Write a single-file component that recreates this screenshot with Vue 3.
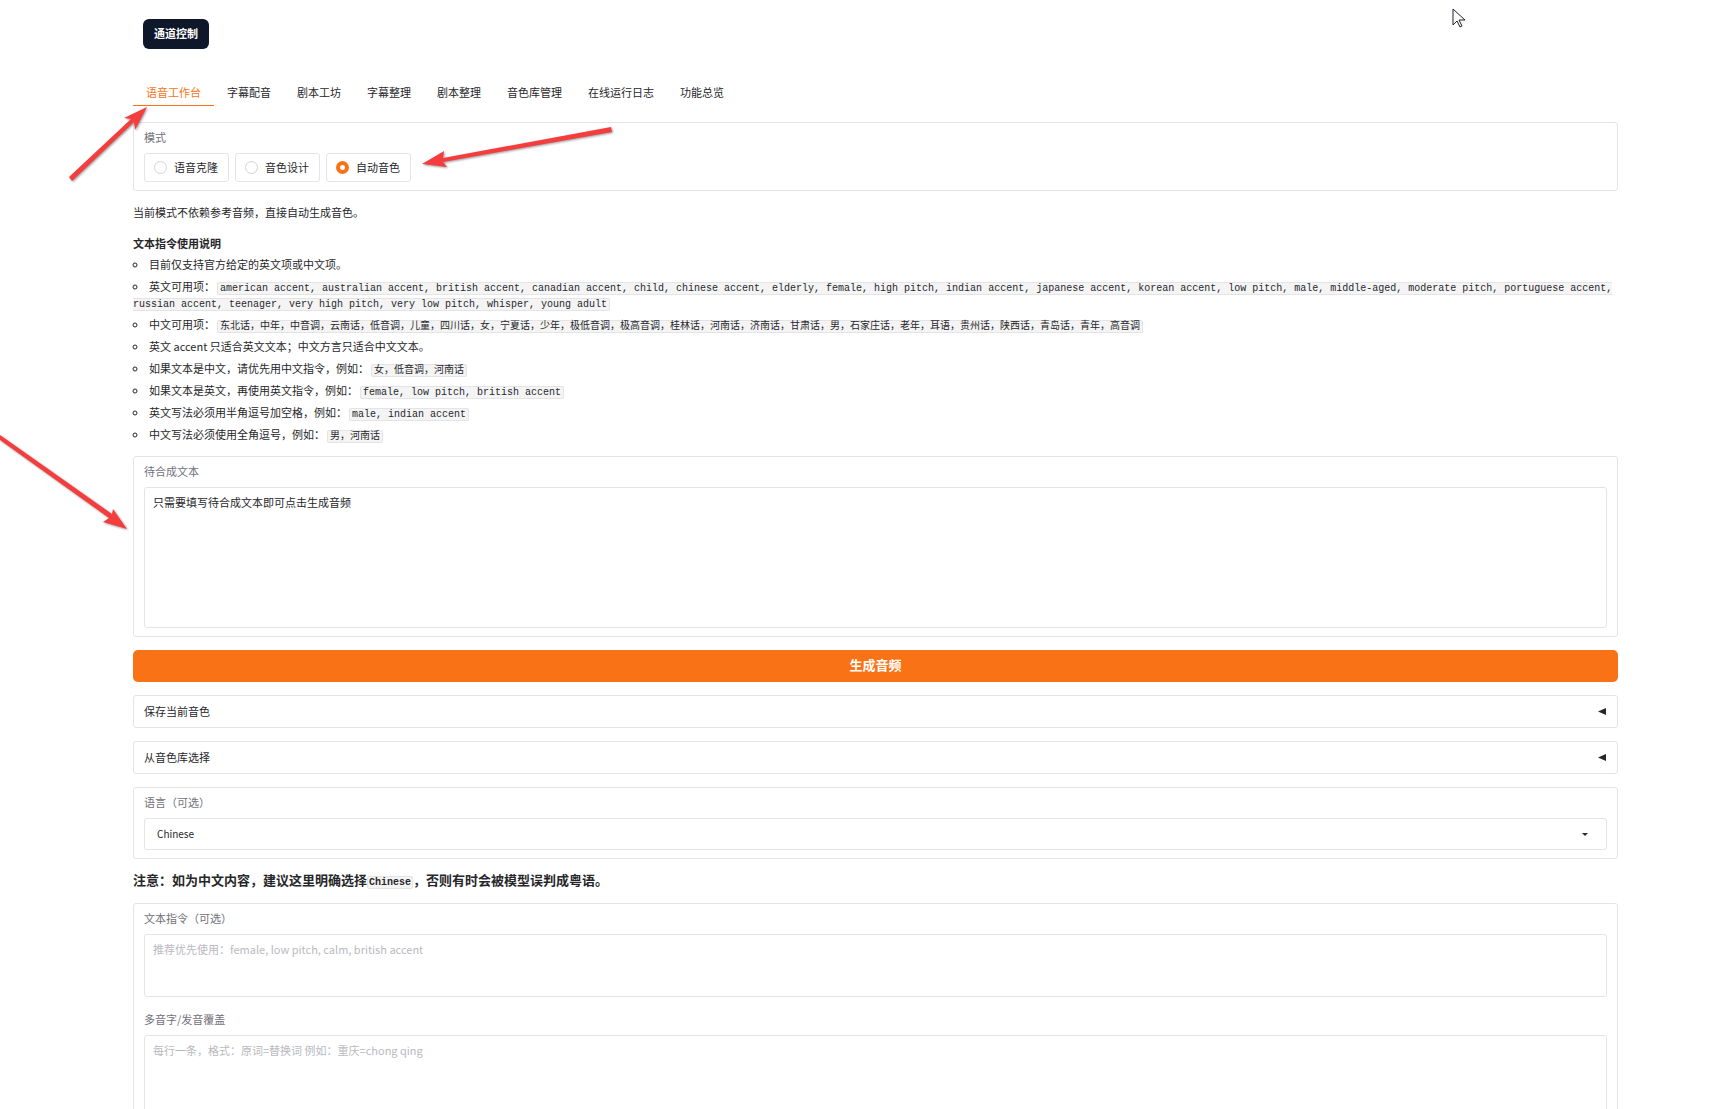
<script setup>
import { ref } from 'vue'

const tabs = ['语音工作台', '字幕配音', '剧本工坊', '字幕整理', '剧本整理', '音色库管理', '在线运行日志', '功能总览']
const activeTab = ref(tabs[0])

const modes = ['语音克隆', '音色设计', '自动音色']
const mode = ref('自动音色')

const tips = [
  { text: '目前仅支持官方给定的英文项或中文项。' },
  {
    text: '英文可用项：',
    code: 'american accent, australian accent, british accent, canadian accent, child, chinese accent, elderly, female, high pitch, indian accent, japanese accent, korean accent, low pitch, male, middle-aged, moderate pitch, portuguese accent, russian accent, teenager, very high pitch, very low pitch, whisper, young adult',
  },
  {
    text: '中文可用项：',
    code: '东北话，中年，中音调，云南话，低音调，儿童，四川话，女，宁夏话，少年，极低音调，极高音调，桂林话，河南话，济南话，甘肃话，男，石家庄话，老年，耳语，贵州话，陕西话，青岛话，青年，高音调',
  },
  { text: '英文 accent 只适合英文文本；中文方言只适合中文文本。' },
  { text: '如果文本是中文，请优先用中文指令，例如：', code: '女，低音调，河南话' },
  { text: '如果文本是英文，再使用英文指令，例如：', code: 'female, low pitch, british accent' },
  { text: '英文写法必须用半角逗号加空格，例如：', code: 'male, indian accent' },
  { text: '中文写法必须使用全角逗号，例如：', code: '男，河南话' },
]

const script = ref('只需要填写待合成文本即可点击生成音频')
const sections = ['保存当前音色', '从音色库选择']
const language = ref('Chinese')
const instruction = ref('')
const pronunciation = ref('')
</script>

<template>
  <div class="page">
    <header class="top">
      <button type="button" class="channel">通道控制</button>
    </header>

    <nav class="tabs" role="tablist">
      <button
        v-for="tab in tabs"
        :key="tab"
        type="button"
        role="tab"
        class="tab"
        :class="{ active: tab === activeTab }"
        :aria-selected="tab === activeTab"
        @click="activeTab = tab"
      >{{ tab }}</button>
    </nav>

    <main class="content">
      <fieldset class="panel modes">
        <legend class="label">模式</legend>
        <div class="options">
          <label v-for="item in modes" :key="item" class="option">
            <input v-model="mode" type="radio" name="mode" :value="item" />
            <span>{{ item }}</span>
          </label>
        </div>
      </fieldset>

      <section class="guide">
        <p class="intro">当前模式不依赖参考音频，直接自动生成音色。</p>
        <h2>文本指令使用说明</h2>
        <ul>
          <li v-for="tip in tips" :key="tip.text">
            {{ tip.text }}<code v-if="tip.code">{{ tip.code }}</code>
          </li>
        </ul>
      </section>

      <div class="panel">
        <label class="label" for="script">待合成文本</label>
        <textarea id="script" v-model="script" class="field large"></textarea>
      </div>

      <button type="button" class="generate">生成音频</button>

      <button v-for="name in sections" :key="name" type="button" class="accordion" aria-expanded="false">
        <span>{{ name }}</span>
        <svg width="8" height="8" viewBox="0 0 8 8" aria-hidden="true"><path d="M0 4.5 8 1v7z" fill="#27272a" /></svg>
      </button>

      <div class="panel">
        <label class="label" for="language">语言（可选）</label>
        <div class="select">
          <select id="language" v-model="language" class="field">
            <option>Chinese</option>
            <option>English</option>
          </select>
          <svg class="caret" width="6" height="3" viewBox="0 0 6 3" aria-hidden="true"><path d="M0 0h6L3 3z" fill="#27272a" /></svg>
        </div>
      </div>

      <h3 class="notice">注意：如为中文内容，建议这里明确选择<code>Chinese</code>，否则有时会被模型误判成粤语。</h3>

      <div class="panel">
        <label class="label" for="instruction">文本指令（可选）</label>
        <textarea
          id="instruction"
          v-model="instruction"
          class="field small"
          placeholder="推荐优先使用：female, low pitch, calm, british accent"
        ></textarea>
        <label class="label next" for="pronunciation">多音字/发音覆盖</label>
        <textarea
          id="pronunciation"
          v-model="pronunciation"
          class="field large"
          placeholder="每行一条，格式：原词=替换词 例如：重庆=chong qing"
        ></textarea>
      </div>
    </main>

    <svg class="marks" width="620" height="540" viewBox="0 0 620 540" aria-hidden="true">
      <g fill="#f53d3d">
        <path d="M69 177 131 119 124 118 147 107 135 130 134 122 72 181z" />
        <path d="M611 127 443 158 444 151 422 164 447 167 443 162 612 132z" />
        <path d="M0 435 112 514 113 509 127 529 103 522 109 518 0 440z" />
      </g>
    </svg>
    <svg class="pointer" width="14" height="20" viewBox="0 0 14 20" aria-hidden="true">
      <path d="M1 1v16l4-4 3 6 2-1-3-6h6z" fill="#fff" stroke="#1f1f2b" stroke-width="1" />
    </svg>
  </div>
</template>

<style>
body {
  margin: 0;
  background: #fff;
}
</style>

<style scoped>
.page {
  position: relative;
  box-sizing: border-box;
  height: 100vh;
  overflow: hidden;
  padding: 19px 116px 0 133px;
  color: #27272a;
  font: 11px/16px 'Noto Sans CJK SC', sans-serif;
}

button,
textarea,
select {
  box-sizing: border-box;
  margin: 0;
  color: inherit;
  font: inherit;
}

.top {
  padding-left: 10px;
}

.channel {
  display: block;
  height: 30px;
  padding: 0 11px 2px;
  border: 0;
  border-radius: 6px;
  background: #0f172a;
  color: #fff;
  font-weight: 700;
}

.tabs {
  display: flex;
  margin-top: 31px;
}

.tab {
  height: 26px;
  padding: 0 13px 1px;
  border: 0;
  border-bottom: 1px solid transparent;
  background: none;
}

.tab.active {
  border-color: #f97316;
  color: #f97316;
}

.content {
  display: flex;
  flex-direction: column;
  gap: 13px;
  margin-top: 16px;
}

.panel {
  display: flex;
  flex-direction: column;
  min-width: 0;
  margin: 0;
  padding: 6px 10px 8px;
  border: 1px solid #e4e4e7;
  border-radius: 3px;
}

.label {
  padding: 0;
  color: #71717a;
}

.modes {
  display: block;
}

.modes .label {
  float: left;
}

.options {
  display: flex;
  gap: 6px;
  clear: both;
  padding-top: 8px;
}

.option {
  display: flex;
  align-items: center;
  gap: 7px;
  box-sizing: border-box;
  height: 29px;
  padding: 0 10px 0 9px;
  border: 1px solid #e4e4e7;
  border-radius: 3px;
}

.option span {
  padding-bottom: 2px;
}

.option input {
  appearance: none;
  box-sizing: border-box;
  width: 13px;
  height: 13px;
  margin: 0;
  border: 1px solid #d4d4d8;
  border-radius: 50%;
  background: #fff;
}

.option input:checked {
  border: 4px solid #f97316;
}

.guide p,
.guide h2,
.guide ul {
  margin: 0;
  padding: 0;
}

.guide h2 {
  margin-top: 15px;
  font-size: 11px;
  font-weight: 700;
}

.guide ul {
  margin-top: 5px;
  padding-bottom: 1px;
  list-style: circle inside;
}

.guide li {
  margin-bottom: 6px;
}

.guide li:last-child {
  margin-bottom: 0;
}

code {
  margin: 0 2px;
  padding: 0 2px;
  border: 1px solid #e4e4e7;
  border-radius: 2px;
  background: #f4f4f5;
  font: 10px/10px 'Liberation Mono', 'Noto Sans CJK SC', monospace;
}

.field {
  display: block;
  width: 100%;
  margin-top: 8px;
  padding: 6px 8px;
  border: 1px solid #e4e4e7;
  border-radius: 3px;
  background: #fff;
  resize: none;
}

.field::placeholder {
  color: #b9b9c0;
}

.large {
  height: 141px;
}

.small {
  height: 63px;
}

.next {
  margin-top: 14px;
}

.generate {
  height: 32px;
  padding-bottom: 3px;
  border: 0;
  border-radius: 5px;
  background: #f97316;
  color: #fff;
  font-size: 13px;
  font-weight: 700;
}

.accordion {
  display: flex;
  align-items: center;
  justify-content: space-between;
  height: 33px;
  padding: 0 11px 2px 10px;
  border: 1px solid #e4e4e7;
  border-radius: 3px;
  background: #fff;
}

.select {
  position: relative;
}

.select .field {
  height: 32px;
  padding: 0 12px;
  appearance: none;
  font-size: 10px;
}

.caret {
  position: absolute;
  top: 23px;
  right: 19px;
}

.notice {
  margin: 0;
  padding-bottom: 2px;
  font-size: 13px;
  font-weight: 700;
}

.notice code {
  margin: 0;
  padding: 0 1px;
  font-weight: 700;
}

.marks {
  position: absolute;
  top: 0;
  left: 0;
  pointer-events: none;
  filter: drop-shadow(1px 1px 1px rgba(0, 0, 0, 0.4));
}

.pointer {
  position: absolute;
  top: 8px;
  right: 268px;
  pointer-events: none;
}
</style>
